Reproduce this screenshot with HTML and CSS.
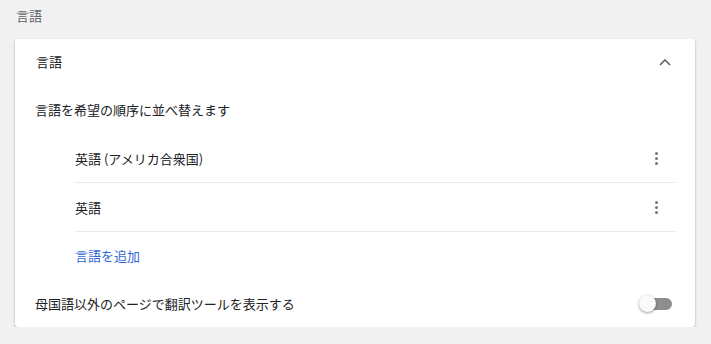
FILE: index.html
```html
<!DOCTYPE html>
<html lang="ja">
<head>
    <meta charset="UTF-8">
    <title>言語</title>
    <link rel="stylesheet" href="styles.css">
</head>
<body>
<div class="page">
    <h2 class="section-title">言語</h2>
    <div class="card">
        <div class="card-header">
            <span>言語</span>
            <svg class="chevron" width="12" height="8" viewBox="0 0 12 8">
                <path d="M1 7 L6 2 L11 7" fill="none" stroke="#666" stroke-width="1.6"/>
            </svg>
        </div>
        <div class="desc">言語を希望の順序に並べ替えます</div>
        <ul class="lang-list">
            <li class="lang-item">
                <span>英語 (アメリカ合衆国)</span>
                <span class="more"><i></i><i></i><i></i></span>
            </li>
            <li class="lang-item">
                <span>英語</span>
                <span class="more"><i></i><i></i><i></i></span>
            </li>
            <li class="lang-add"><a href="#">言語を追加</a></li>
        </ul>
        <div class="toggle-row">
            <span>母国語以外のページで翻訳ツールを表示する</span>
            <span class="toggle"><span class="knob"></span></span>
        </div>
    </div>
</div>
</body>
</html>
```

FILE: styles.css
```css
*{
    margin: 0;
    padding: 0;
    box-sizing: border-box;
}
ul{
    list-style: none;
}
body{
    background: #f1f1f1;
    font-family: "Noto Sans CJK JP", "Noto Sans", sans-serif;
    font-size: 13px;
    color: #202124;
}
.page{
    padding: 0 16px 0 15px;
}
.section-title{
    font-size: 13px;
    font-weight: normal;
    color: #5f6368;
    height: 39px;
    line-height: 31px;
    padding-left: 1px;
}
.card{
    background: #fff;
    border-radius: 3px;
    box-shadow: 0 1px 2px rgba(0,0,0,0.2), 0 2px 3px rgba(0,0,0,0.15);
}
.card-header{
    height: 48px;
    display: flex;
    align-items: center;
    justify-content: space-between;
    padding: 0 24px 3px 21px;
}
.chevron{
    margin-top: 1px;
}
.desc{
    height: 44px;
    display: flex;
    align-items: center;
    padding-left: 20px;
}
.lang-list{
    padding: 3px 20px 0 60px;
}
.lang-item{
    height: 49px;
    display: flex;
    align-items: center;
    justify-content: space-between;
    border-bottom: 1px solid #e8e8e8;
}
.more{
    display: flex;
    flex-direction: column;
    gap: 2px;
    margin-right: 17px;
}
.more i{
    width: 3px;
    height: 3px;
    border-radius: 50%;
    background: #757575;
}
.lang-add{
    height: 47px;
    display: flex;
    align-items: center;
}
.lang-add a{
    color: #3367d6;
    text-decoration: none;
}
.toggle-row{
    height: 48px;
    display: flex;
    align-items: center;
    justify-content: space-between;
    padding: 0 23px 0 20px;
}
.toggle{
    position: relative;
    width: 32px;
    height: 12px;
    border-radius: 6px;
    background: #8e8e8e;
    margin-top: 1px;
}
.toggle .knob{
    position: absolute;
    left: -1px;
    top: -3px;
    width: 17px;
    height: 17px;
    border-radius: 50%;
    background: #fafafa;
    box-shadow: 0 1px 3px rgba(0,0,0,0.4);
}
```
